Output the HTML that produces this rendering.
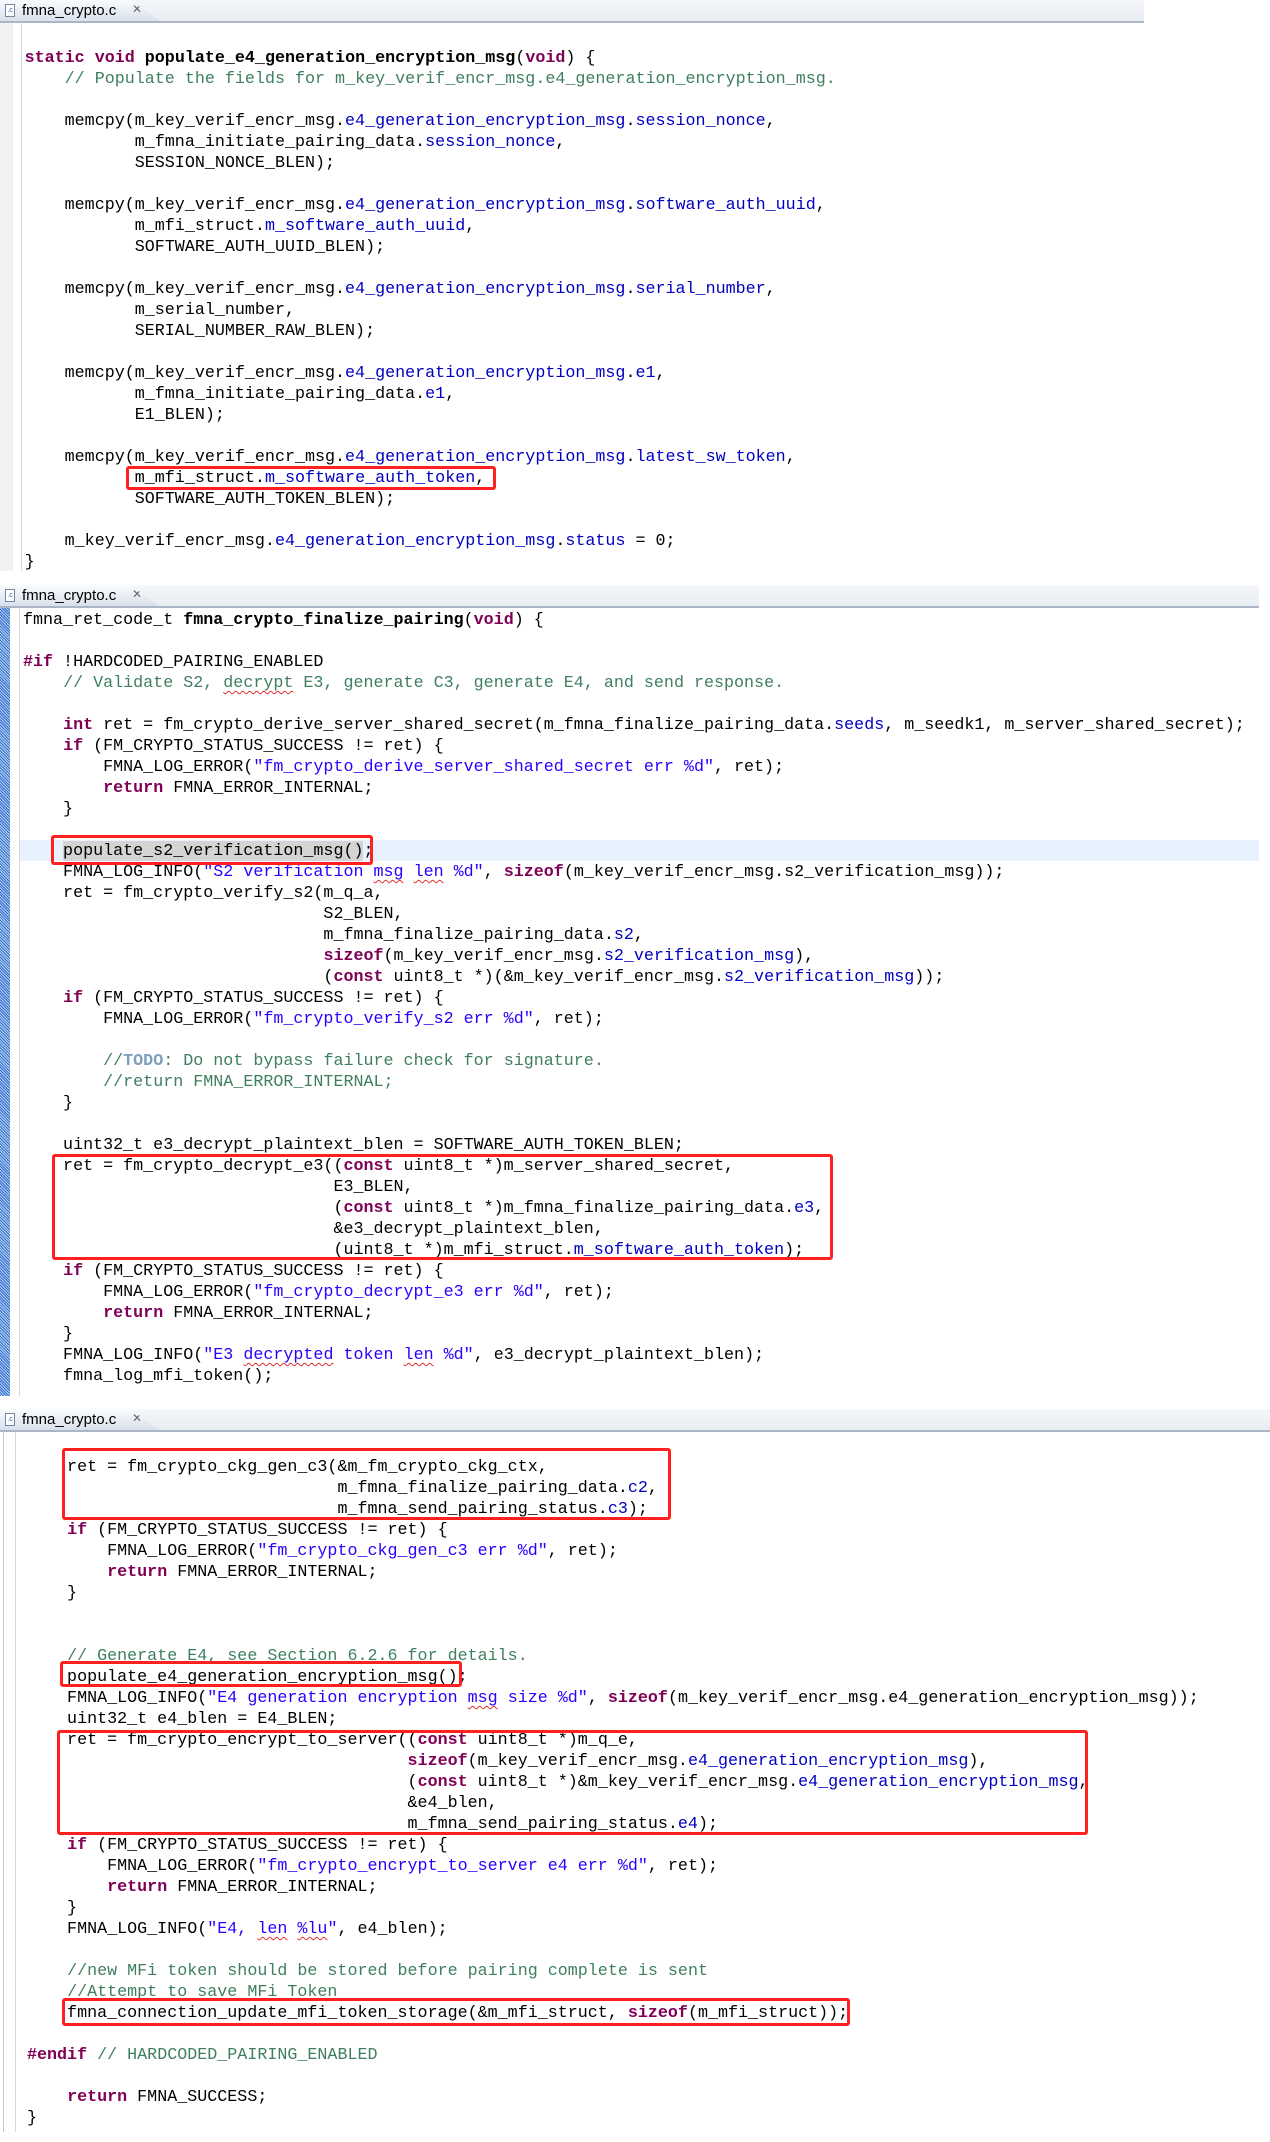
<!DOCTYPE html>
<html><head><meta charset="utf-8"><style>
*{margin:0;padding:0;box-sizing:border-box}
body{width:1270px;height:2142px;background:#fff;position:relative;overflow:hidden;font-family:"Liberation Mono",monospace}
.bar{position:absolute;left:0;height:23px;background:linear-gradient(#f4f6f9,#e9edf2);border-bottom:2px solid #aab6c6}
.tab{position:absolute;left:0;top:0;width:160px;height:21px;background:linear-gradient(#fafbfd,#d8e1ec);clip-path:polygon(0 0,130px 0,160px 21px,0 21px);border-radius:3px 0 0 0}
.tab .ic{position:absolute;left:5px;top:4px;width:10px;height:13px;border:1px solid #7a8aa0;background:#fff;font:7px "Liberation Sans",sans-serif;color:#2a5db0;text-align:center;line-height:11px}
.tab .t{position:absolute;left:22px;top:2px;font:15px "Liberation Sans",sans-serif;color:#000}
.tab .x{position:absolute;left:132px;top:2px;font:12px "DejaVu Sans",sans-serif;color:#666}
pre{position:absolute;font-family:"Liberation Mono",monospace;font-size:16.7px;line-height:21px;color:#000;white-space:pre}
.k{color:#7f0055;font-weight:bold}
.f{color:#0000c0}
.s{color:#2a00ff}
.c{color:#3f7f5f}
.b{font-weight:bold}
.w{text-decoration:underline wavy #e03030;text-decoration-thickness:1px;text-underline-offset:3px}
.box{position:absolute;border:3px solid #ff2020;border-radius:3px}
.vl{position:absolute;width:1px;background:#d8d8d8}
</style></head><body>

<!-- panel 1 -->
<div class="bar" style="top:0;width:1144px"><div class="tab"><div class="ic">.c</div><div class="t">fmna_crypto.c</div><div class="x">✕</div></div></div>
<div style="position:absolute;left:0;top:23px;width:13px;height:548px;background:#f2f2f2"></div>
<div class="vl" style="left:21px;top:23px;height:548px"></div>
<pre style="left:24.6px;top:47.5px"><span class="k">static</span> <span class="k">void</span> <span class="b">populate_e4_generation_encryption_msg</span>(<span class="k">void</span>) {
    <span class="c">// Populate the fields for m_key_verif_encr_msg.e4_generation_encryption_msg.</span>

    memcpy(m_key_verif_encr_msg.<span class="f">e4_generation_encryption_msg</span>.<span class="f">session_nonce</span>,
           m_fmna_initiate_pairing_data.<span class="f">session_nonce</span>,
           SESSION_NONCE_BLEN);

    memcpy(m_key_verif_encr_msg.<span class="f">e4_generation_encryption_msg</span>.<span class="f">software_auth_uuid</span>,
           m_mfi_struct.<span class="f">m_software_auth_uuid</span>,
           SOFTWARE_AUTH_UUID_BLEN);

    memcpy(m_key_verif_encr_msg.<span class="f">e4_generation_encryption_msg</span>.<span class="f">serial_number</span>,
           m_serial_number,
           SERIAL_NUMBER_RAW_BLEN);

    memcpy(m_key_verif_encr_msg.<span class="f">e4_generation_encryption_msg</span>.<span class="f">e1</span>,
           m_fmna_initiate_pairing_data.<span class="f">e1</span>,
           E1_BLEN);

    memcpy(m_key_verif_encr_msg.<span class="f">e4_generation_encryption_msg</span>.<span class="f">latest_sw_token</span>,
           m_mfi_struct.<span class="f">m_software_auth_token</span>,
           SOFTWARE_AUTH_TOKEN_BLEN);

    m_key_verif_encr_msg.<span class="f">e4_generation_encryption_msg</span>.<span class="f">status</span> = 0;
}</pre>
<div class="box" style="left:126px;top:466px;width:370px;height:24px"></div>

<!-- panel 2 -->
<div class="bar" style="top:585px;width:1259px"><div class="tab"><div class="ic">.c</div><div class="t">fmna_crypto.c</div><div class="x">✕</div></div></div>
<div style="position:absolute;left:0;top:608px;width:10px;height:788px;background:repeating-linear-gradient(45deg,#2f6fd0 0 1px,#b8d0f0 1px 2px)"></div>
<div class="vl" style="left:19px;top:608px;height:788px"></div>
<div style="position:absolute;left:20px;top:840px;width:1239px;height:21px;background:#e8f2fe"></div>
<div style="position:absolute;left:63px;top:841px;width:300px;height:20px;background:#d4d4d4"></div>
<pre style="left:23px;top:610px">fmna_ret_code_t <span class="b">fmna_crypto_finalize_pairing</span>(<span class="k">void</span>) {

<span class="k">#if</span> !HARDCODED_PAIRING_ENABLED
    <span class="c">// Validate S2, <span class="w">decrypt</span> E3, generate C3, generate E4, and send response.</span>

    <span class="k">int</span> ret = fm_crypto_derive_server_shared_secret(m_fmna_finalize_pairing_data.<span class="f">seeds</span>, m_seedk1, m_server_shared_secret);
    <span class="k">if</span> (FM_CRYPTO_STATUS_SUCCESS != ret) {
        FMNA_LOG_ERROR(<span class="s">"fm_crypto_derive_server_shared_secret err %d"</span>, ret);
        <span class="k">return</span> FMNA_ERROR_INTERNAL;
    }

    populate_s2_verification_msg();
    FMNA_LOG_INFO(<span class="s">"S2 verification <span class="w">msg</span> <span class="w">len</span> %d"</span>, <span class="k">sizeof</span>(m_key_verif_encr_msg.s2_verification_msg));
    ret = fm_crypto_verify_s2(m_q_a,
                              S2_BLEN,
                              m_fmna_finalize_pairing_data.<span class="f">s2</span>,
                              <span class="k">sizeof</span>(m_key_verif_encr_msg.<span class="f">s2_verification_msg</span>),
                              (<span class="k">const</span> uint8_t *)(&amp;m_key_verif_encr_msg.<span class="f">s2_verification_msg</span>));
    <span class="k">if</span> (FM_CRYPTO_STATUS_SUCCESS != ret) {
        FMNA_LOG_ERROR(<span class="s">"fm_crypto_verify_s2 err %d"</span>, ret);

        <span class="c">//<span style="color:#7f9fbf;font-weight:bold">TODO</span>: Do not bypass failure check for signature.</span>
        <span class="c">//return FMNA_ERROR_INTERNAL;</span>
    }

    uint32_t e3_decrypt_plaintext_blen = SOFTWARE_AUTH_TOKEN_BLEN;
    ret = fm_crypto_decrypt_e3((<span class="k">const</span> uint8_t *)m_server_shared_secret,
                               E3_BLEN,
                               (<span class="k">const</span> uint8_t *)m_fmna_finalize_pairing_data.<span class="f">e3</span>,
                               &amp;e3_decrypt_plaintext_blen,
                               (uint8_t *)m_mfi_struct.<span class="f">m_software_auth_token</span>);
    <span class="k">if</span> (FM_CRYPTO_STATUS_SUCCESS != ret) {
        FMNA_LOG_ERROR(<span class="s">"fm_crypto_decrypt_e3 err %d"</span>, ret);
        <span class="k">return</span> FMNA_ERROR_INTERNAL;
    }
    FMNA_LOG_INFO(<span class="s">"E3 <span class="w">decrypted</span> token <span class="w">len</span> %d"</span>, e3_decrypt_plaintext_blen);
    fmna_log_mfi_token();</pre>
<div class="box" style="left:51px;top:835px;width:322px;height:30px"></div>
<div class="box" style="left:52px;top:1154px;width:781px;height:106px"></div>

<!-- panel 3 -->
<div class="bar" style="top:1409px;width:1270px"><div class="tab"><div class="ic">.c</div><div class="t">fmna_crypto.c</div><div class="x">✕</div></div></div>
<div class="vl" style="left:3px;top:1432px;height:700px;background:#c8c8c8"></div>
<div class="vl" style="left:15px;top:1432px;height:700px"></div>
<pre style="left:27px;top:1457px">    ret = fm_crypto_ckg_gen_c3(&amp;m_fm_crypto_ckg_ctx,
                               m_fmna_finalize_pairing_data.<span class="f">c2</span>,
                               m_fmna_send_pairing_status.<span class="f">c3</span>);
    <span class="k">if</span> (FM_CRYPTO_STATUS_SUCCESS != ret) {
        FMNA_LOG_ERROR(<span class="s">"fm_crypto_ckg_gen_c3 err %d"</span>, ret);
        <span class="k">return</span> FMNA_ERROR_INTERNAL;
    }


    <span class="c">// Generate E4, see Section 6.2.6 for details.</span>
    populate_e4_generation_encryption_msg();
    FMNA_LOG_INFO(<span class="s">"E4 generation encryption <span class="w">msg</span> size %d"</span>, <span class="k">sizeof</span>(m_key_verif_encr_msg.e4_generation_encryption_msg));
    uint32_t e4_blen = E4_BLEN;
    ret = fm_crypto_encrypt_to_server((<span class="k">const</span> uint8_t *)m_q_e,
                                      <span class="k">sizeof</span>(m_key_verif_encr_msg.<span class="f">e4_generation_encryption_msg</span>),
                                      (<span class="k">const</span> uint8_t *)&amp;m_key_verif_encr_msg.<span class="f">e4_generation_encryption_msg</span>,
                                      &amp;e4_blen,
                                      m_fmna_send_pairing_status.<span class="f">e4</span>);
    <span class="k">if</span> (FM_CRYPTO_STATUS_SUCCESS != ret) {
        FMNA_LOG_ERROR(<span class="s">"fm_crypto_encrypt_to_server e4 err %d"</span>, ret);
        <span class="k">return</span> FMNA_ERROR_INTERNAL;
    }
    FMNA_LOG_INFO(<span class="s">"E4, <span class="w">len</span> <span class="w">%lu</span>"</span>, e4_blen);

    <span class="c">//new MFi token should be stored before pairing complete is sent</span>
    <span class="c">//Attempt to save MFi Token</span>
    fmna_connection_update_mfi_token_storage(&amp;m_mfi_struct, <span class="k">sizeof</span>(m_mfi_struct));

<span class="k">#endif</span> <span class="c">// HARDCODED_PAIRING_ENABLED</span>

    <span class="k">return</span> FMNA_SUCCESS;
}</pre>
<div class="box" style="left:62px;top:1448px;width:609px;height:72px"></div>
<div class="box" style="left:60px;top:1661px;width:402px;height:26px"></div>
<div class="box" style="left:57px;top:1730px;width:1031px;height:105px"></div>
<div class="box" style="left:62px;top:1998px;width:788px;height:28px"></div>
</body></html>
